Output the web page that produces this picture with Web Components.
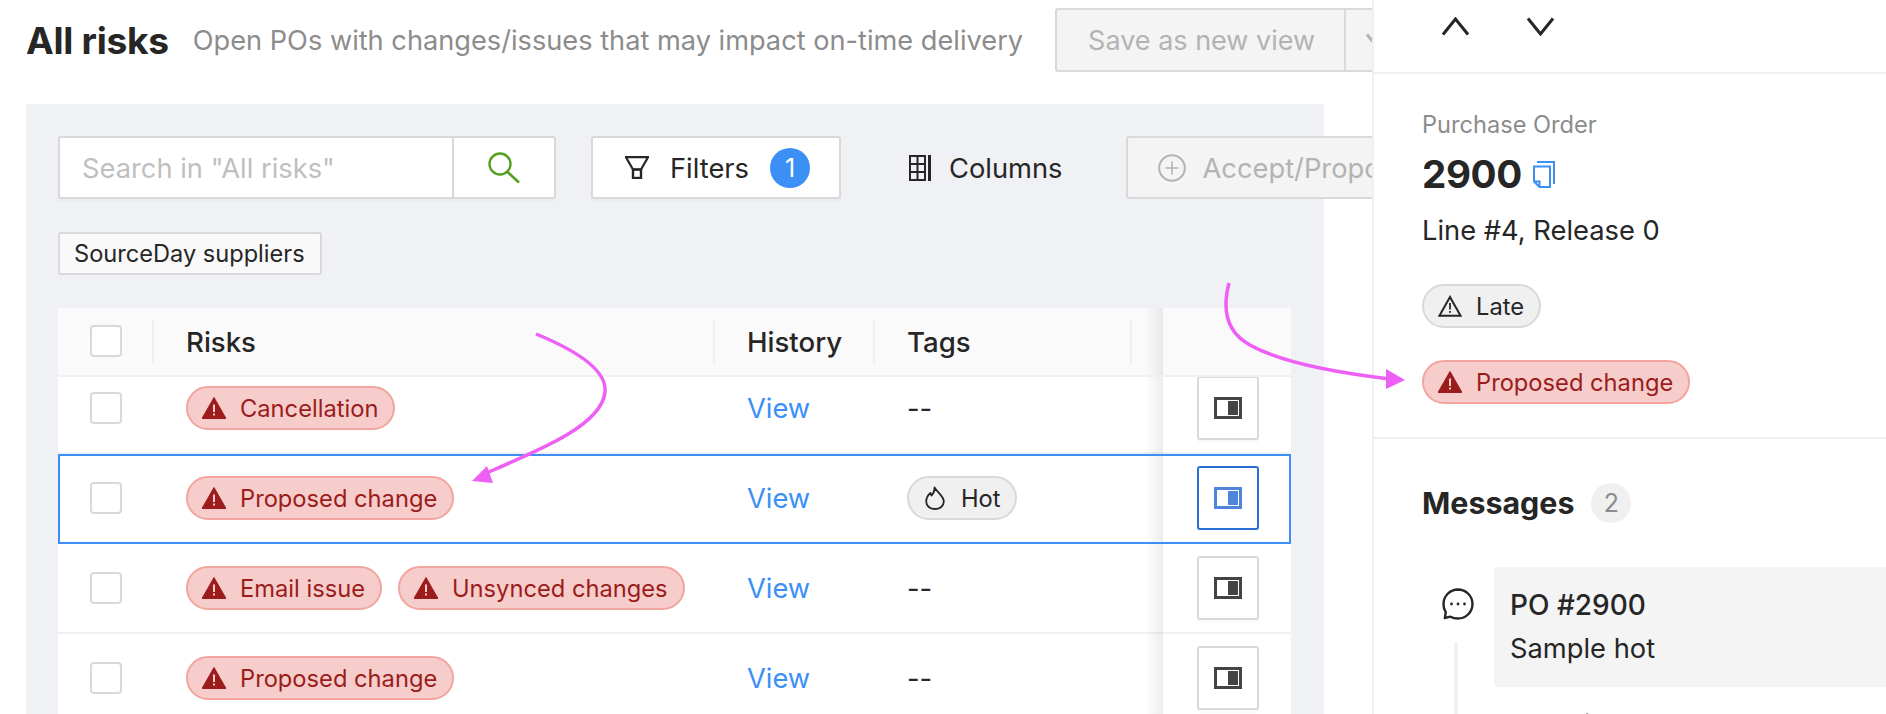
<!DOCTYPE html>
<html lang="en">
<head>
<meta charset="utf-8">
<title>All risks</title>
<style>
  html, body { margin: 0; height: 714px; overflow: hidden; background: #fff; }
  body { font-family: Inter, "Noto Sans", sans-serif; color: #262626; font-size: 27.3px; }
</style>
</head>
<body>
<risk-app></risk-app>
<script>
const ICONS = {
  triFill: '<svg width="24" height="22" viewBox="0 0 24 22"><path d="M12 0.500 L24 21.500 H0 Z" fill="currentColor" stroke="currentColor" stroke-linejoin="round"/><rect x="11" y="7.500" width="2" height="7.500" fill="#f6cdca"/><rect x="11" y="16.500" width="2" height="2" fill="#f6cdca"/></svg>',
  triLine: '<svg width="24" height="22" viewBox="0 0 24 22"><path d="M12 2 L22.600 20.800 H1.400 Z" fill="none" stroke="currentColor" stroke-width="2" stroke-linejoin="miter"/><rect x="11.100" y="8" width="1.800" height="6.500" fill="currentColor"/><rect x="11.100" y="16" width="1.800" height="1.800" fill="currentColor"/></svg>',
  flame: '<svg width="20" height="24" viewBox="0 0 20 24"><path d="M9.500 1.500c.5 4-1 5.500-3 8-.6-.8-.9-1.500-1.100-2.500C3 9 1.200 12 1.200 15.500 1.200 20 5 23 10 23s8.800-3 8.800-7.500c0-5-5-7.500-9.300-14z" fill="none" stroke="currentColor" stroke-width="1.800" stroke-linejoin="round"/></svg>',
  search: '<svg width="32" height="31" viewBox="0 0 32 31"><circle cx="12" cy="12" r="10.500" fill="none" stroke="#52a01e" stroke-width="2.400"/><path d="M19.500 20 L31 30.500" stroke="#52a01e" stroke-width="2.600" fill="none"/></svg>',
  funnel: '<svg width="24" height="23" viewBox="0 0 24 23"><path d="M1 1.200 H23 L16 13.500 H8 Z" fill="none" stroke="#262626" stroke-width="2.200"/><rect x="8" y="13.500" width="8" height="8.500" fill="none" stroke="#262626" stroke-width="2.400"/></svg>',
  columns: '<svg width="22" height="26" viewBox="0 0 22 26"><path d="M1 1 H16 V25 H1 Z M1 9 H16 M1 17 H16 M8.500 1 V25" fill="none" stroke="#262626" stroke-width="2"/><rect x="19" y="0" width="3" height="26" fill="#262626"/></svg>',
  plus: '<svg width="28" height="28" viewBox="0 0 28 28"><circle cx="14" cy="14" r="12.800" fill="none" stroke="#b3b3b3" stroke-width="2"/><path d="M14 7.500 V20.500 M7.500 14 H20.500" stroke="#b3b3b3" stroke-width="1.600"/></svg>',
  down: '<svg width="27" height="19" viewBox="0 0 27 19"><path d="M1 1.500 L13.500 17 L26 1.500" fill="none" stroke="currentColor" stroke-width="3"/></svg>',
  up: '<svg width="27" height="19" viewBox="0 0 27 19"><path d="M1 17.500 L13.500 2 L26 17.500" fill="none" stroke="currentColor" stroke-width="3"/></svg>',
  copy: '<svg width="22" height="27" viewBox="0 0 22 27"><path d="M4 1 H21 V23" fill="none" stroke="#3c8ff5" stroke-width="2"/><path d="M1 5.500 H17 V26 H6.500 L1 20.500 Z M1 20.500 H6.500 V26" fill="none" stroke="#3c8ff5" stroke-width="2"/></svg>',
  chat: '<svg width="32" height="32" viewBox="0 0 32 32"><path d="M16 1.500a14.500 14.500 0 0 1 0 29c-3 0-5.500-.7-7.500-1.800L2.800 30l1-5.800C2.200 22 1.500 19 1.500 16A14.500 14.500 0 0 1 16 1.500z" fill="none" stroke="#262626" stroke-width="2.400" stroke-linejoin="round"/><circle cx="9.500" cy="16" r="1.400" fill="#262626"/><circle cx="16" cy="16" r="1.400" fill="#262626"/><circle cx="22.500" cy="16" r="1.400" fill="#262626"/></svg>'
};

function define(name, css, html, extra) {
  const tpl = document.createElement('template');
  tpl.innerHTML = '<style>' + css + '</style>' + html;
  customElements.define(name, class extends HTMLElement {
    constructor() {
      super();
      this.attachShadow({ mode: 'open' }).appendChild(tpl.content.cloneNode(true));
    }
    connectedCallback() { if (extra) extra(this); }
  });
}

define('x-icon', ':host{display:inline-flex;line-height:0;flex:none}', '<span id="i"></span>', el => {
  el.shadowRoot.getElementById('i').innerHTML = ICONS[el.getAttribute('name')] || '';
});

define('x-pill', `
  :host{display:inline-flex;align-items:center;box-sizing:border-box;height:44px;border:2px solid #d9d9d9;border-radius:22px;background:#f0f0f0;color:#262626;padding:0 15px 0 14px;gap:14px;font-size:23.7px;line-height:28px;white-space:nowrap;flex:none}
  :host([kind="risk"]){background:#f6cdca;border-color:#f2a49e;color:#9b1c1c}
  :host([kind="hot"]){padding:0 14px 0 16px;gap:16px}
  .t{padding-top:1px}
`, '<x-icon id="ic"></x-icon><span class="t"><slot></slot></span>', el => {
  const k = el.getAttribute('kind');
  const ic = el.shadowRoot.getElementById('ic');
  ic.shadowRoot.getElementById('i').innerHTML = k === 'risk' ? ICONS.triFill : k === 'hot' ? ICONS.flame : ICONS.triLine;
});

define('x-btn', `
  :host{display:inline-flex;align-items:center;box-sizing:border-box;height:63px;border:2px solid #d9d9d9;border-radius:3px;background:#fff;font-size:27.3px;white-space:nowrap;flex:none;box-shadow:0 3px 0 rgba(0,0,0,.02)}
  :host([disabled]){background:#f4f4f4;color:#b3b3b3;box-shadow:none}
  :host([plain]){background:transparent;border-color:transparent;box-shadow:none}
`, '<slot></slot>');

define('x-header', `
  :host{display:flex;align-items:center;height:64px;padding:8px 0 0 26px;width:1600px}
  h1{margin:0;padding-top:2px;font-size:37.2px;font-weight:700;line-height:44px;letter-spacing:-.3px;color:#262626}
  p{margin:2px 0 0 24px;font-size:27.2px;line-height:32px;color:#8c8c8c;white-space:nowrap}
  .save{margin-left:32px;height:64px;flex:none}
  .lbl{padding:0 0 0 31px;width:287px;box-sizing:border-box;display:block;font-size:27px}
  .sep{width:2px;align-self:stretch;background:#d9d9d9}
  .cv{padding:4px 0 0 20px;color:#b3b3b3;display:flex}
`, `<h1><slot name="title"></slot></h1><p><slot name="sub"></slot></p>
  <x-btn class="save" disabled><span class="lbl">Save as new view</span><span class="sep"></span><span class="cv"><x-icon name="down"></x-icon></span></x-btn>`);

define('x-toolbar', `
  :host{display:flex;align-items:center;height:63px}
  .search{width:498px}
  .row{display:flex;align-items:center;align-self:stretch;width:100%}
  .q{flex:1;padding:1px 0 0 22px;color:#bfbfbf}
  .go{width:100px;align-self:stretch;border-left:2px solid #d9d9d9;display:flex;align-items:center;justify-content:center}
  .filters{margin-left:35px;width:250px;padding-left:32px;box-sizing:border-box}
  .in{display:inline-flex;align-items:center}
  .tx{padding-top:1px}
  .badge{width:40px;height:40px;border-radius:50%;background:#3c8ff5;color:#fff;display:flex;align-items:center;justify-content:center;font-size:25px}
  .cols{margin-left:66px;padding:0}
  .accept{margin-left:61px;padding-left:30px;width:500px;box-sizing:border-box}
`, `<x-btn class="search"><span class="row"><span class="q">Search in "All risks"</span><span class="go"><x-icon name="search"></x-icon></span></span></x-btn>
  <x-btn class="filters"><span class="in" style="gap:21px"><x-icon name="funnel"></x-icon><span class="tx">Filters</span><span class="badge">1</span></span></x-btn>
  <x-btn class="cols" plain><span class="in" style="gap:18px"><x-icon name="columns"></x-icon><span class="tx">Columns</span></span></x-btn>
  <x-btn class="accept" disabled><span class="in" style="gap:17px"><x-icon name="plus"></x-icon><span class="tx">Accept/Propose changes</span></span></x-btn>`);

define('x-chip', `
  :host{display:inline-flex;align-items:center;box-sizing:border-box;height:43px;padding:0 15px 0 14px;border:2px solid #d9d9d9;border-radius:3px;background:#f9f9f9;font-size:23.6px;white-space:nowrap}
`, '<slot></slot>');

define('x-check', `
  :host{display:block;box-sizing:border-box;width:32px;height:32px;border:2px solid #d9d9d9;border-radius:4px;background:#fff}
`, '');

define('x-drawer-btn', `
  :host{display:flex;align-items:center;justify-content:center;box-sizing:border-box;width:62px;height:64px;border:2px solid #d9d9d9;border-radius:3px;background:#fff;color:#444;box-shadow:0 3px 0 rgba(0,0,0,.02)}
  :host([active]){border-color:#2a6fd6;color:#4f86dc}
  .o{box-sizing:border-box;width:28px;height:22px;border:3px solid currentColor;display:flex;justify-content:flex-end;padding:1px;}
  .f{width:10px;background:currentColor}
`, '<span class="o"><span class="f"></span></span>');

define('x-row', `
  :host{display:grid;grid-template-columns:96px 561px 160px 288px 128px;height:90px;box-sizing:border-box;border-bottom:2px solid #f0f0f0;position:relative;align-items:center;font-size:27.3px;background:#fff}
  :host([selected]){border-bottom-color:transparent}
  :host([selected])::after{content:"";position:absolute;left:0;right:0;top:0;bottom:-2px;border:2px solid #3c8ff5;pointer-events:none;z-index:3}
  .c0{padding-left:32px}
  .c1{padding-left:32px;display:flex;gap:16px}
  .c2{padding-left:32px;color:#3c8ff5}
  .c3{padding-left:32px;display:flex}
  .c4{align-self:stretch;padding-left:34px;display:flex;align-items:center;background:#fff;height:100%;position:relative}
  .c4::before{content:"";position:absolute;left:-18px;top:0;bottom:-2px;width:18px;background:linear-gradient(90deg,rgba(0,0,0,0),rgba(0,0,0,.07))}
`, `<div class="c0"><x-check></x-check></div>
  <div class="c1"><slot name="risks"></slot></div>
  <div class="c2">View</div>
  <div class="c3"><slot name="tags"></slot></div>
  <div class="c4"><x-drawer-btn id="b"></x-drawer-btn></div>`, el => {
  if (el.hasAttribute('selected')) el.shadowRoot.getElementById('b').setAttribute('active', '');
});

define('x-table', `
  :host{display:block;width:1233px;height:406px;overflow:hidden;background:#fff}
  .head{display:grid;grid-template-columns:96px 561px 160px 288px 128px;height:69px;box-sizing:border-box;background:#fafafa;border-bottom:2px solid #f0f0f0;align-items:center;position:relative;z-index:2;font-weight:500;font-size:27.6px}
  .h{height:45px;display:flex;align-items:center;padding:2px 0 0 32px;box-sizing:border-box;border-right:2px solid #f0f0f0;margin-top:-1px}
  .h:first-child{padding-top:0}
  .h.t{margin-right:31px}
  .h.e{border:0;height:67px;margin:0;background:#fafafa;position:relative}
  .h.e::before{content:"";position:absolute;left:-18px;top:0;bottom:0;width:18px;background:linear-gradient(90deg,rgba(0,0,0,0),rgba(0,0,0,.07))}
  .rows{margin-top:-13px}
`, `<div class="head">
    <div class="h"><x-check></x-check></div>
    <div class="h">Risks</div><div class="h">History</div><div class="h t">Tags</div><div class="h e"></div>
  </div>
  <div class="rows"><slot></slot></div>`);

define('x-panel', `
  :host{display:block;margin:32px 0 0 26px;width:1298px;height:610px;box-sizing:border-box;padding:32px 33px 0 32px;background:#f0f1f5}
  .chips{margin-top:33px;height:43px;display:flex}
  .tbl{margin-top:33px}
`, `<x-toolbar></x-toolbar><div class="chips"><slot name="chips"></slot></div><div class="tbl"><slot></slot></div>`);

define('x-side', `
  :host{display:block;flex:1;min-width:0;box-sizing:border-box;border-left:2px solid #f0f0f0;background:#fff;height:714px;overflow:hidden;position:relative;z-index:1}
  .top{height:72px;box-sizing:border-box;padding:17px 0 0 68px;display:flex;gap:58px;align-items:flex-start;color:#262626}
  .rule{height:2px;background:#f0f0f0}
  .po{padding:35px 0 0 48px;height:363px;box-sizing:border-box}
  .lab{font-size:23.6px;line-height:32px;color:#8c8c8c}
  .num{display:flex;align-items:center;gap:11px;margin-top:11px;height:44px;font-size:38.6px;font-weight:700;line-height:44px;letter-spacing:-.4px}
  .line{margin-top:19px;line-height:32px;font-size:27.3px}
  .tags{margin-top:37px;display:flex;flex-direction:column;align-items:flex-start;gap:32px}
  .msgs{padding:44px 0 0 48px}
  .mh{display:flex;align-items:center;gap:17px;height:40px;font-size:30.4px;font-weight:700}
  .ct{width:40px;height:40px;border-radius:50%;background:#f0f0f0;color:#8c8c8c;font-size:25px;font-weight:400;display:flex;align-items:center;justify-content:center}
  .thread{display:flex;margin-top:44px;margin-left:20px;gap:20px;}
  .rail{width:32px;flex:none;padding-top:21px;display:flex;flex-direction:column;align-items:center}
  .bar{width:4px;height:80px;background:#f0f0f0;margin:23px 0 0 -4px;flex:none}
  .box{flex:1;height:120px;box-sizing:border-box;background:#f4f4f4;border-radius:4px 0 0 4px;padding:16px 0 0 16px;line-height:44px;font-size:27.3px}
  .b{font-weight:500;font-size:28px}
  .n{padding:22px 0 0 16px;line-height:32px;font-size:27.3px}
`, `<div class="top"><x-icon name="up"></x-icon><x-icon name="down"></x-icon></div>
  <div class="rule"></div>
  <div class="po">
    <div class="lab">Purchase Order</div>
    <div class="num"><span>2900</span><x-icon name="copy"></x-icon></div>
    <div class="line">Line #4, Release 0</div>
    <div class="tags"><x-pill kind="late">Late</x-pill><x-pill kind="risk">Proposed change</x-pill></div>
  </div>
  <div class="rule"></div>
  <div class="msgs">
    <div class="mh"><span>Messages</span><span class="ct">2</span></div>
    <div class="thread">
      <div class="rail"><x-icon name="chat"></x-icon><div class="bar"></div></div>
      <div style="flex:1;min-width:0">
        <div class="box"><div class="b">PO #2900</div><div>Sample hot</div></div>
        <div class="n">Supplier</div>
      </div>
    </div>
  </div>`);

define('x-arrows', `
  :host{position:absolute;left:0;top:0;width:1886px;height:714px;pointer-events:none;z-index:5}
  svg{display:block}
`, `<svg width="1886" height="714" viewBox="0 0 1886 714">
    <path d="M536 334 C580 352 607 372 605 392 C602 425 540 450 484 474" fill="none" stroke="#ee5ff5" stroke-width="3.500"/>
    <path d="M472 481 L487 466 L493 483 Z" fill="#ee5ff5"/>
    <path d="M1229 283 C1222 310 1226 332 1250 345 C1280 362 1330 372 1390 379" fill="none" stroke="#ee5ff5" stroke-width="3.500"/>
    <path d="M1405 380 L1386 369 L1386 389 Z" fill="#ee5ff5"/>
  </svg>`);

define('risk-app', `
  :host{display:flex;width:1886px;height:714px;position:relative;overflow:hidden}
  .main{flex:0 0 1372px;width:1372px;height:714px;overflow:hidden}
`, `<div class="main">
    <x-header><span slot="title">All risks</span><span slot="sub">Open POs with changes/issues that may impact on-time delivery</span></x-header>
    <x-panel>
      <x-chip slot="chips">SourceDay suppliers</x-chip>
      <x-table>
        <x-row><x-pill slot="risks" kind="risk">Cancellation</x-pill><span slot="tags">--</span></x-row>
        <x-row selected><x-pill slot="risks" kind="risk">Proposed change</x-pill><x-pill slot="tags" kind="hot">Hot</x-pill></x-row>
        <x-row><x-pill slot="risks" kind="risk">Email issue</x-pill><x-pill slot="risks" kind="risk">Unsynced changes</x-pill><span slot="tags">--</span></x-row>
        <x-row><x-pill slot="risks" kind="risk">Proposed change</x-pill><span slot="tags">--</span></x-row>
      </x-table>
    </x-panel>
  </div>
  <x-side></x-side>
  <x-arrows></x-arrows>`);
</script>
</body>
</html>
